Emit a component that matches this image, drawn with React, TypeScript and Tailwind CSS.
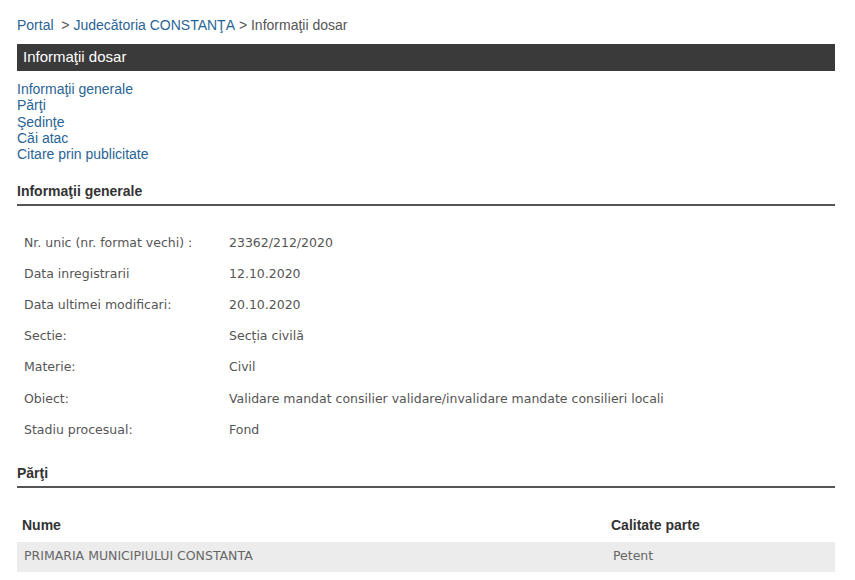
const rows: [string, string][] = [
  ["Nr. unic (nr. format vechi) :", "23362/212/2020"],
  ["Data inregistrarii", "12.10.2020"],
  ["Data ultimei modificari:", "20.10.2020"],
  ["Sectie:", "Secția civilă"],
  ["Materie:", "Civil"],
  ["Obiect:", "Validare mandat consilier validare/invalidare mandate consilieri locali"],
  ["Stadiu procesual:", "Fond"],
];

const links = ["Informaţii generale", "Părţi", "Şedinţe", "Căi atac", "Citare prin publicitate"];

function SectionTitle({ children }: { children: React.ReactNode }) {
  return (
    <div className="border-b-2 border-[#555] pb-[2px] text-[14px] font-bold text-[#333]">
      {children}
    </div>
  );
}

export default function App() {
  return (
    <div className="min-h-screen bg-white pl-[17px] pt-[16px] font-['Liberation_Sans',Arial,sans-serif]">
      <div className="w-[818px]">
        <div className="text-[14px] leading-[18px] text-[#555]">
          <a className="text-[#2a6496]">Portal</a>
          <span>&nbsp; &gt; </span>
          <a className="text-[#2a6496]">Judecătoria CONSTANŢA</a>
          <span>&nbsp;&gt; Informaţii dosar</span>
        </div>

        <div className="mt-[10px] flex h-[27px] items-center bg-[#3a3a3a] px-[6px] text-[15px] text-white">
          Informaţii dosar
        </div>

        <div className="mt-[10px] flex flex-col text-[14px] leading-[16.3px] text-[#2a6496]">
          {links.map((l) => (
            <a key={l}>{l}</a>
          ))}
        </div>

        <div className="mt-[19px]">
          <SectionTitle>Informaţii generale</SectionTitle>
        </div>

        <table className="mt-[21px] w-full border-collapse font-['DejaVu_Sans',Verdana,sans-serif] text-[12.5px] text-[#555]">
          <tbody>
            {rows.map(([k, v]) => (
              <tr key={k} className="h-[31.2px]">
                <td className="w-[212px] pl-[7px]">{k}</td>
                <td>{v}</td>
              </tr>
            ))}
          </tbody>
        </table>

        <div className="mt-[17px]">
          <SectionTitle>Părţi</SectionTitle>
        </div>

        <table className="mt-[22px] w-full border-collapse text-left">
          <thead>
            <tr className="h-[32px] text-[14px] font-bold text-[#333]">
              <th className="pl-[5px]">Nume</th>
              <th className="w-[224px] pl-[0px]">Calitate parte</th>
            </tr>
          </thead>
          <tbody>
            <tr className="h-[30px] bg-[#ececec] font-['DejaVu_Sans',Verdana,sans-serif] text-[12.5px] text-[#666]">
              <td className="pl-[7px]">PRIMARIA MUNICIPIULUI CONSTANTA</td>
              <td className="pl-[2px]">Petent</td>
            </tr>
          </tbody>
        </table>
      </div>
    </div>
  );
}
